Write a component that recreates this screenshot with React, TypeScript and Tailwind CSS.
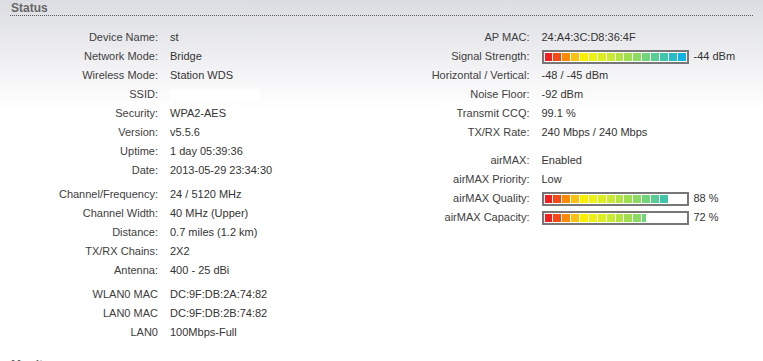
const SEGMENT_COLORS = [
  "#f02020", "#f84818", "#fa8a08", "#fcc010",
  "#fbee00", "#eef010", "#dcee22", "#c8ec30",
  "#b4e640", "#a0e050", "#8cda62", "#72d47a",
  "#58cc92", "#40c4aa", "#28bcc6", "#10b4e4",
];

const Meter = ({ pct }: { pct: number }) => (
  <div className="h-[14px] w-[147px] border-2 border-[#777] bg-white p-px">
    <div className="h-full overflow-hidden" style={{ width: `${pct}%` }}>
      <div className="flex h-full w-[141px] gap-px">
        {SEGMENT_COLORS.map((c) => (
          <div key={c} className="h-full flex-1" style={{ backgroundColor: c }} />
        ))}
      </div>
    </div>
  </div>
);

type Row = { label?: string; value?: React.ReactNode; gap?: string };

const left: Row[] = [
  { label: "Device Name:", value: "st" },
  { label: "Network Mode:", value: "Bridge" },
  { label: "Wireless Mode:", value: "Station WDS" },
  {
    label: "SSID:",
    value: <div className="h-[12px] w-[90px] rounded-[3px] bg-white shadow-[0_0_2px_#fff]" />,
  },
  { label: "Security:", value: "WPA2-AES" },
  { label: "Version:", value: "v5.5.6" },
  { label: "Uptime:", value: "1 day 05:39:36" },
  { label: "Date:", value: "2013-05-29 23:34:30" },
  { gap: "h-[5px]" },
  { label: "Channel/Frequency:", value: "24 / 5120 MHz" },
  { label: "Channel Width:", value: "40 MHz (Upper)" },
  { label: "Distance:", value: "0.7 miles (1.2 km)" },
  { label: "TX/RX Chains:", value: "2X2" },
  { label: "Antenna:", value: "400 - 25 dBi" },
  { gap: "h-[5px]" },
  { label: "WLAN0 MAC", value: "DC:9F:DB:2A:74:82" },
  { label: "LAN0 MAC", value: "DC:9F:DB:2B:74:82" },
  { label: "LAN0", value: "100Mbps-Full" },
];

const withMeter = (pct: number, text: string) => (
  <div className="flex items-center gap-[5px]">
    <Meter pct={pct} />
    <span>{text}</span>
  </div>
);

const right: Row[] = [
  { label: "AP MAC:", value: "24:A4:3C:D8:36:4F" },
  { label: "Signal Strength:", value: withMeter(100, "-44 dBm") },
  { label: "Horizontal / Vertical:", value: "-48 / -45 dBm" },
  { label: "Noise Floor:", value: "-92 dBm" },
  { label: "Transmit CCQ:", value: "99.1 %" },
  { label: "TX/RX Rate:", value: "240 Mbps / 240 Mbps" },
  { gap: "h-[9px]" },
  { label: "airMAX:", value: "Enabled" },
  { label: "airMAX Priority:", value: "Low" },
  { label: "airMAX Quality:", value: withMeter(88, "88 %") },
  { label: "airMAX Capacity:", value: withMeter(72, "72 %") },
];

const InfoTable = ({ rows }: { rows: Row[] }) => (
  <div className="grid content-start grid-cols-[148px_1fr] gap-x-3">
    {rows.map((r, i) =>
      r.gap ? (
        <div key={i} className={`col-span-2 ${r.gap}`} />
      ) : (
        <div key={i} className="col-span-2 grid h-[19px] grid-cols-subgrid items-center">
          <div className="whitespace-nowrap text-right text-[#404040]">{r.label}</div>
          <div className="whitespace-nowrap text-[#333]">{r.value}</div>
        </div>
      )
    )}
  </div>
);

const App = () => {
  return (
    <div className="h-[361px] w-full overflow-hidden bg-linear-to-b from-[#dcdde2] to-white to-[30%] px-[10px] pt-px font-['Liberation_Sans',Arial,sans-serif] text-[11px]">
      <div className="border-b border-dotted border-[#555] pl-px text-[12px] font-bold leading-[14px] text-[#666]">
        Status
      </div>
      <div className="mt-3 grid grid-cols-2 items-start">
        <InfoTable rows={left} />
        <InfoTable rows={right} />
      </div>
      <div className="mt-[16px] border-b border-dotted border-[#555] pl-px text-[12px] font-bold leading-[14px] text-[#666]">
        Monitor
      </div>
    </div>
  );
};

export default App;
